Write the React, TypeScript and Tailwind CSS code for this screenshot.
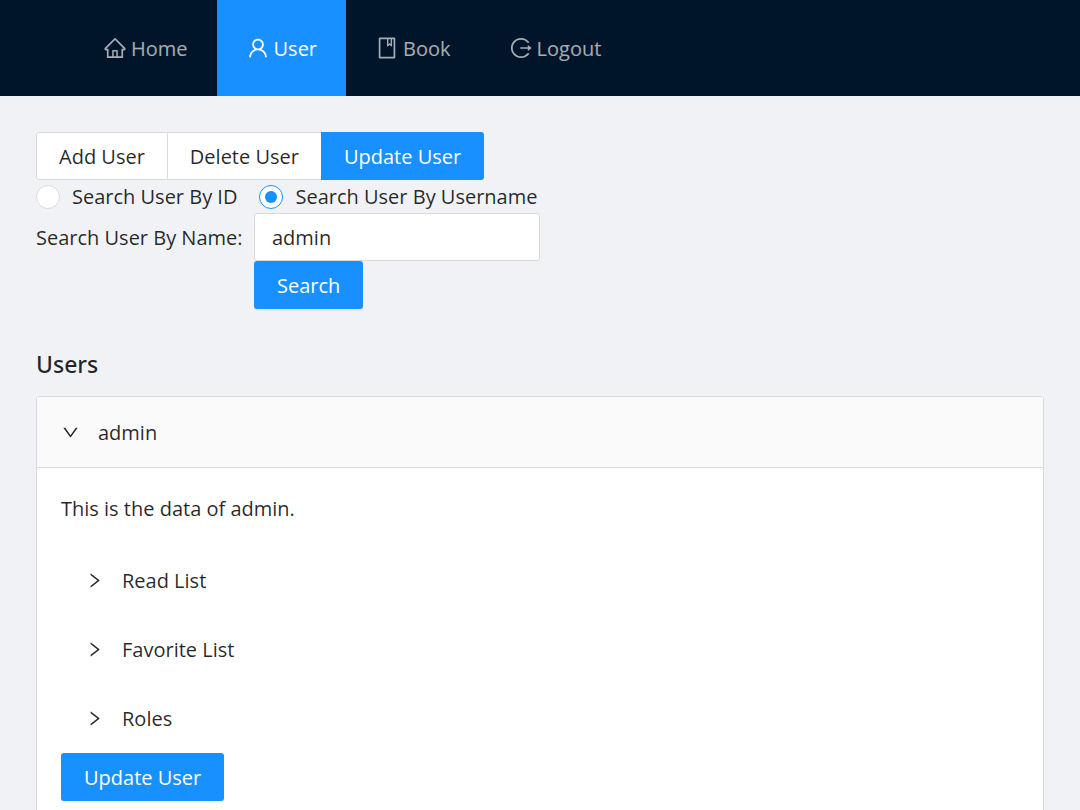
import { useState } from 'react';
import { AiOutlineHome, AiOutlineUser, AiOutlineBook, AiOutlineLogout, AiOutlineRight, AiOutlineDown } from 'react-icons/ai';

const nav = [
  { label: 'Home', Icon: AiOutlineHome },
  { label: 'User', Icon: AiOutlineUser },
  { label: 'Book', Icon: AiOutlineBook },
  { label: 'Logout', Icon: AiOutlineLogout },
];

const modes = [
  { value: 'id', label: 'Search User By ID' },
  { value: 'name', label: 'Search User By Username' },
];

const lists = ['Read List', 'Favorite List', 'Roles'];

export default function App() {
  const [mode, setMode] = useState('name');
  const [query, setQuery] = useState('admin');
  return (
    <div className="min-h-screen bg-[#f0f2f5] font-['Open_Sans','Noto_Sans',sans-serif] text-[20px] leading-[33px] text-black/85">
      <header className="bg-[#001529] pl-[74px]">
        <nav className="flex h-24 items-stretch">
          {nav.map(({ label, Icon }) => (
            <a key={label} href="#" className={`flex items-center gap-1 px-[29px] ${label === 'User' ? 'bg-[#1890ff] text-white' : 'text-white/65'}`}>
              <Icon className="size-6" />
              {label}
            </a>
          ))}
        </nav>
      </header>
      <main className="px-9 pt-9">
        <div className="flex h-12">
          <button className="rounded-l-[3px] border border-[#d9d9d9] bg-white px-[22px]">Add User</button>
          <button className="border-y border-[#d9d9d9] bg-white px-[22px]">Delete User</button>
          <button className="rounded-r-[3px] bg-[#1890ff] px-[23px] text-white">Update User</button>
        </div>
        <div className="flex h-[33px] items-center gap-[22px]">
          {modes.map(({ value, label }) => (
            <label key={value} className="flex items-center gap-3">
              <input
                type="radio"
                name="mode"
                checked={mode === value}
                onChange={() => setMode(value)}
                className="grid size-6 appearance-none place-items-center rounded-full border border-[#d9d9d9] bg-white before:size-3 before:rounded-full checked:border-[#1890ff] checked:before:bg-[#1890ff]"
              />
              {label}
            </label>
          ))}
        </div>
        <form className="grid max-w-[504px] grid-cols-[1fr_286px]" onSubmit={(e) => e.preventDefault()}>
          <label htmlFor="username" className="flex items-center">
            Search User By Name<span>:</span>
          </label>
          <input id="username" value={query} onChange={(e) => setQuery(e.target.value)} className="h-12 min-w-0 rounded-[3px] border border-[#d9d9d9] bg-white px-[17px] outline-none" />
          <button className="col-start-2 h-12 justify-self-start rounded-[3px] bg-[#1890ff] px-[23px] text-white shadow-[0_2px_0_rgba(0,0,0,0.045)]">Search</button>
        </form>
        <h2 className="mt-[39px] mb-[15px] font-['Noto_Sans','Open_Sans',sans-serif] text-[23px] font-medium">Users</h2>
        <section className="rounded-t-[3px] border border-[#d9d9d9] bg-white">
          <button className="flex h-[71px] w-full items-center gap-[18px] border-b border-[#d9d9d9] bg-[#fafafa] px-6">
            <AiOutlineDown className="size-[19px]" />
            admin
          </button>
          <div className="p-6">
            <p className="mb-[21px]">This is the data of admin.</p>
            {lists.map((name) => (
              <button key={name} className="flex h-[69px] w-full items-center gap-[18px] px-6">
                <AiOutlineRight className="size-[19px]" />
                {name}
              </button>
            ))}
            <button className="h-12 rounded-[3px] bg-[#1890ff] px-[23px] text-white shadow-[0_2px_0_rgba(0,0,0,0.045)]">Update User</button>
          </div>
        </section>
      </main>
    </div>
  );
}
